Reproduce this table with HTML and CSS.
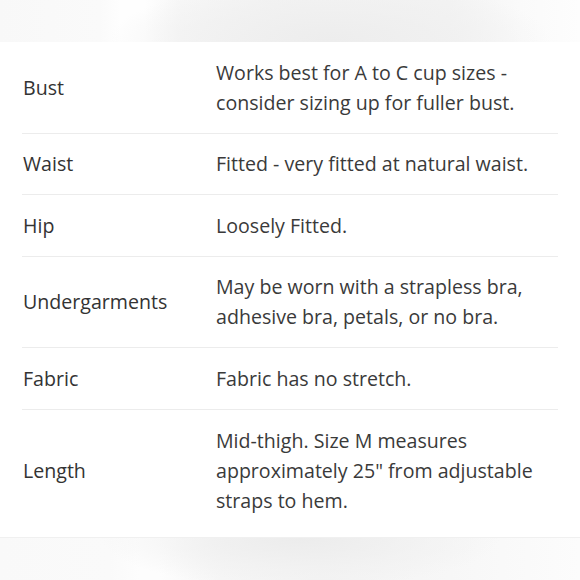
FILE: index.html
```html
<!DOCTYPE html>
<html>
<head>
<meta charset="utf-8">
<link rel="stylesheet" href="styles.css">
</head>
<body>
<div class="bg-top"></div>
<main class="panel">
  <div class="row"><div class="label">Bust</div><div class="value">Works best for A to C cup sizes -<br>consider sizing up for fuller bust.</div></div>
  <div class="row"><div class="label">Waist</div><div class="value">Fitted - very fitted at natural waist.</div></div>
  <div class="row"><div class="label">Hip</div><div class="value">Loosely Fitted.</div></div>
  <div class="row"><div class="label">Undergarments</div><div class="value">May be worn with a strapless bra,<br>adhesive bra, petals, or no bra.</div></div>
  <div class="row"><div class="label">Fabric</div><div class="value">Fabric has no stretch.</div></div>
  <div class="row last"><div class="label">Length</div><div class="value">Mid-thigh. Size M measures<br>approximately 25" from adjustable<br>straps to hem.</div></div>
</main>
<div class="bg-bottom"></div>
</body>
</html>
```
FILE: styles.css
```css
html, body { margin: 0; padding: 0; }
body {
  width: 580px;
  height: 580px;
  overflow: hidden;
  background: #fbfbfb;
  font-family: "Open Sans", Lato, sans-serif;
  color: #333;
}
.bg-top {
  height: 42px;
  background:
    radial-gradient(ellipse 220px 60px at 330px 40px, #ededed 0%, rgba(240,240,240,0.7) 60%, rgba(250,250,250,0) 100%),
    linear-gradient(90deg, #f8f8f8 0px, #fafafa 100px, #fefefe 120px, #fefefe 145px, #f7f7f7 180px, #f2f2f2 300px, #f3f3f3 450px, #fafafa 520px, #fdfdfd 580px);
}
.bg-bottom {
  height: 43px;
  border-top: 1px solid #f0f0f0;
  background:
    radial-gradient(ellipse 200px 50px at 300px 0px, #ececec 0%, rgba(240,240,240,0.6) 60%, rgba(250,250,250,0) 100%),
    linear-gradient(90deg, #f9f9f9 0px, #fafafa 110px, #fdfdfd 140px, #fdfdfd 160px, #f6f6f6 220px, #f3f3f3 320px, #f7f7f7 450px, #fcfcfc 580px);
}
.panel {
  background: #fff;
  height: 495px;
  padding: 0 22px;
  box-sizing: border-box;
}
.row {
  display: grid;
  grid-template-columns: 193px 1fr;
  align-items: center;
  padding: 15.6px 0 15px 1px;
  border-bottom: 1px solid #ececec;
  font-size: 19.6px;
  line-height: 30px;
}
.row.last { border-bottom: none; }
.label { color: #333; }
.value { color: #3a3a3a; }
```
